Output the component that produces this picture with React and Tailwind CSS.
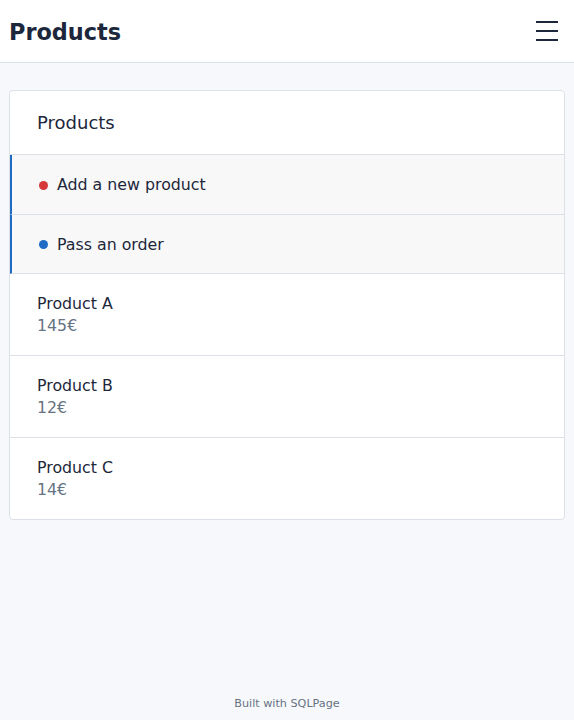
const actions = [
  { label: 'Add a new product', dot: 'bg-[#d63939]' },
  { label: 'Pass an order', dot: 'bg-[#206bc4]' },
];

const products = [
  { name: 'Product A', price: '145€' },
  { name: 'Product B', price: '12€' },
  { name: 'Product C', price: '14€' },
];

export default function App() {
  return (
    <div className="min-h-[720px] flex flex-col bg-[#f6f8fb] text-[#1d273b] font-['DejaVu_Sans',sans-serif]">
      <header className="h-[63px] flex items-center justify-between pl-[9px] pr-[16px] bg-white border-b border-[#dce1e7]">
        <h1 className="text-[22.4px] font-bold pt-[3px]">Products</h1>
        <button className="flex flex-col gap-[7px] py-1">
          <span className="block w-[22px] h-[2px] bg-[#1d273b]" />
          <span className="block w-[22px] h-[2px] bg-[#1d273b]" />
          <span className="block w-[22px] h-[2px] bg-[#1d273b]" />
        </button>
      </header>

      <main className="flex-1 px-[9px] pt-[27px]">
        <div className="bg-white rounded border border-[#dce1e7] overflow-hidden">
          <div className="h-[64px] flex items-center px-[27px] text-[18px] border-b border-[#dce1e7]">
            Products
          </div>
          {actions.map((a) => (
            <div
              key={a.label}
              className="h-[59.5px] flex items-center gap-[9px] pl-[27px] pt-[2px] bg-[#f8f8f8] border-l-2 border-[#206bc4] border-b border-b-[#dce1e7] text-[15.8px]"
            >
              <span className={`w-[9px] h-[9px] rounded-full ${a.dot}`} />
              {a.label}
            </div>
          ))}
          {products.map((p, i) => (
            <div
              key={p.name}
              className={`flex flex-col justify-center px-[27px] pt-[1px] text-[15.8px] leading-[22px] ${i < products.length - 1 ? 'h-[82px] border-b border-[#dce1e7]' : 'h-[81px]'}`}
            >
              <div>{p.name}</div>
              <div className="text-[#667382]">{p.price}</div>
            </div>
          ))}
        </div>
      </main>

      <footer className="h-[32px] flex items-center justify-center text-[11.2px] text-[#667382]">
        Built with SQLPage
      </footer>
    </div>
  );
}
